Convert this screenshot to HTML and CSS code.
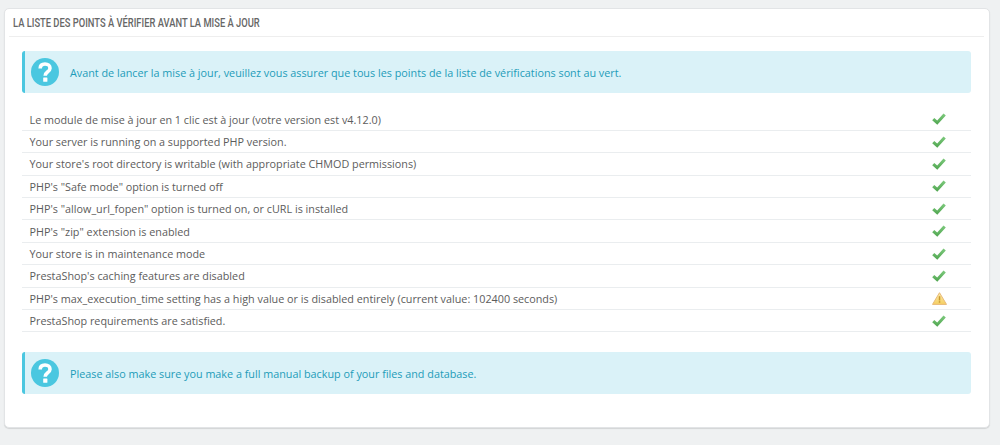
FILE: index.html
```html
<!DOCTYPE html>
<html lang="fr">
<head>
<meta charset="utf-8">
<title>Liste des points à vérifier</title>
<link rel="stylesheet" href="styles.css">
</head>
<body>
<svg class="defs" width="0" height="0" aria-hidden="true">
  <defs>
    <linearGradient id="okfill" x1="0" y1="0" x2="0" y2="1">
      <stop offset="0" stop-color="#7fcb7f"/>
      <stop offset="1" stop-color="#4fa54f"/>
    </linearGradient>
    <linearGradient id="warnfill" x1="0" y1="0" x2="0" y2="1">
      <stop offset="0" stop-color="#fbeaa8"/>
      <stop offset="1" stop-color="#f5cf62"/>
    </linearGradient>
    <symbol id="help" viewBox="0 0 28 28">
      <circle cx="14" cy="14" r="14" fill="#4ac7e0"/>
      <path d="M9.200 10.600C9.200 7.500 11.300 6 14 6C17 6 19 7.800 19 10.200C19 12.300 17.600 13.200 16.200 14.200C14.900 15.100 14.200 15.800 14.200 17.800" fill="none" stroke="#fff" stroke-width="3.600"/>
      <rect x="12.200" y="19.600" width="4.200" height="4.200" rx=".5" fill="#fff"/>
    </symbol>
    <symbol id="ok" viewBox="0 0 14 12">
      <path d="M.2 7.300 2.300 5.100 5.200 7.500 11.500.4 13.800 2.400 5.300 11.700z" fill="url(#okfill)"/>
    </symbol>
    <symbol id="warn" viewBox="0 0 15 13">
      <path d="M7.500.7 14.500 12.400H.5z" fill="url(#warnfill)" stroke="#e8b978" stroke-width="1" stroke-linejoin="round"/>
      <rect x="6.800" y="4.200" width="1.500" height="4.300" fill="#c9982f"/>
      <rect x="6.800" y="9.200" width="1.500" height="1.500" fill="#c9982f"/>
    </symbol>
  </defs>
</svg>
<main class="panel">
  <h3 class="panel-heading"><span class="panel-title">La liste des points à vérifier avant la mise à jour</span></h3>
  <div class="alert alert-first">
    <svg class="alert-icon"><use href="#help"/></svg>
    <p>Avant de lancer la mise à jour, veuillez vous assurer que tous les points de la liste de vérifications sont au vert.</p>
  </div>
  <ul class="checklist">
    <li><span>Le module de mise à jour en 1 clic est à jour (votre version est v4.12.0)</span><svg class="ok"><use href="#ok"/></svg></li>
    <li><span>Your server is running on a supported PHP version.</span><svg class="ok"><use href="#ok"/></svg></li>
    <li><span>Your store's root directory is writable (with appropriate CHMOD permissions)</span><svg class="ok"><use href="#ok"/></svg></li>
    <li><span>PHP's "Safe mode" option is turned off</span><svg class="ok"><use href="#ok"/></svg></li>
    <li><span>PHP's "allow_url_fopen" option is turned on, or cURL is installed</span><svg class="ok"><use href="#ok"/></svg></li>
    <li><span>PHP's "zip" extension is enabled</span><svg class="ok"><use href="#ok"/></svg></li>
    <li><span>Your store is in maintenance mode</span><svg class="ok"><use href="#ok"/></svg></li>
    <li><span>PrestaShop's caching features are disabled</span><svg class="ok"><use href="#ok"/></svg></li>
    <li><span>PHP's max_execution_time setting has a high value or is disabled entirely (current value: 102400 seconds)</span><svg class="warn"><use href="#warn"/></svg></li>
    <li><span>PrestaShop requirements are satisfied.</span><svg class="ok"><use href="#ok"/></svg></li>
  </ul>
  <div class="alert">
    <svg class="alert-icon"><use href="#help"/></svg>
    <p>Please also make sure you make a full manual backup of your files and database.</p>
  </div>
</main>
</body>
</html>
```
FILE: styles.css
```css
* { box-sizing: border-box; }
html, body { margin: 0; height: 445px; overflow: hidden; }
body {
  background: #eff1f2;
  font-family: "Open Sans", sans-serif;
  font-size: 10.8px;
  color: #5c5c5c;
  padding: 7.500px 10px 0 4px;
}
.defs { display: block; height: 0; }
.panel {
  height: 420.500px;
  background: #fff;
  border: 1px solid #e2e4e6;
  border-radius: 5px;
  box-shadow: 0 1px 1px rgba(0, 0, 0, .12);
  padding: 0 18px 0 17px;
}
.panel-heading {
  margin: 0 -13px;
  height: 28px;
  padding: 5px 5px 0 4px;
  border-bottom: 1px solid #eee;
  font-size: 13px;
  font-weight: 400;
  line-height: 17px;
  color: #555;
}
.panel-title {
  display: inline-block;
  font-family: "Roboto", sans-serif;
  font-weight: 500;
  text-transform: uppercase;
  white-space: nowrap;
  transform: scaleX(.72);
  transform-origin: left center;
  color: #666;
}
.alert {
  height: 42px;
  display: flex;
  align-items: center;
  gap: 11px;
  padding-left: 6px;
  background: #daf2f8;
  border-left: 3px solid #4ac7e0;
  border-radius: 3px;
  color: #1d9cb8;
}
.alert-first { margin-top: 14.500px; }
.alert p { margin: 0; }
.alert-icon { width: 28px; height: 28px; flex: none; }
.checklist {
  list-style: none;
  margin: 15.500px 0 20px;
  padding: 0;
}
.checklist li {
  height: 22.400px;
  display: flex;
  align-items: center;
  justify-content: space-between;
  padding: 0 25px 0 7.500px;
  border-bottom: 1px solid #eaedef;
}
.ok { width: 14px; height: 12px; flex: none; }
.warn { width: 15px; height: 13px; flex: none; margin-right: -0.500px; }
```
